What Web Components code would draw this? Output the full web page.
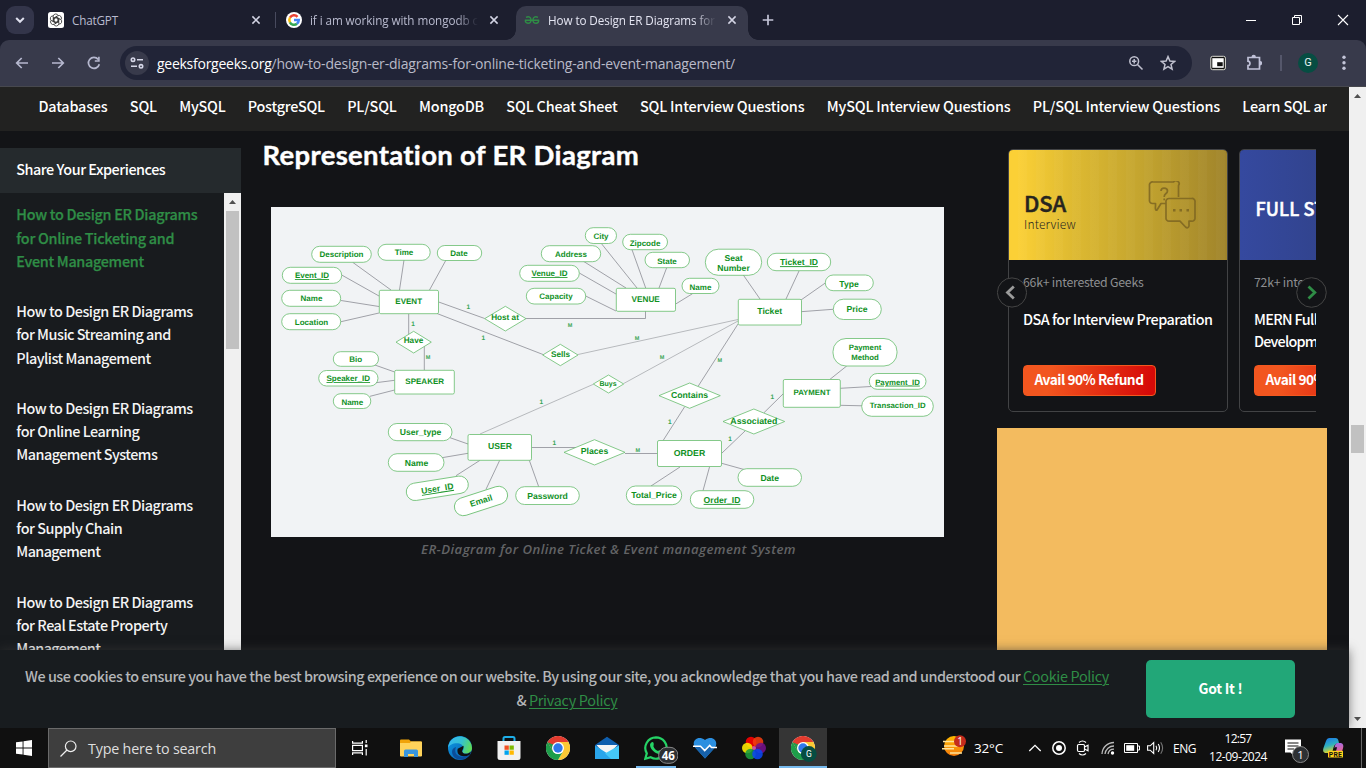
<!DOCTYPE html>
<html lang="en">
<head>
<meta charset="utf-8">
<title>How to Design ER Diagrams</title>
<style>
html,body{margin:0;height:100%;overflow:hidden;background:#131417}
</style>
</head>
<body>
<browser-window></browser-window>
<script>
const UI = '"Open Sans","Noto Sans",sans-serif';
const SRC = '"Noto Sans CJK SC","Open Sans",sans-serif';

function define(name, html, after) {
  const tpl = document.createElement('template');
  tpl.innerHTML = html;
  customElements.define(name, class extends HTMLElement {
    connectedCallback() {
      if (this.shadowRoot) return;
      this.attachShadow({mode: 'open'}).appendChild(tpl.content.cloneNode(true));
      if (after) after.call(this, this.shadowRoot);
    }
  });
}

/* One line of text tracked to an exact width. */
define('fit-text', `<style>:host{display:block;white-space:pre}span{display:inline-block}:host([link]) span{text-decoration:underline;text-decoration-thickness:1px;text-underline-offset:2px}</style><span><slot></slot></span>`, function (r) {
  const w = +this.getAttribute('w'), s = r.querySelector('span');
  if (!w) return;
  const n = this.textContent.length, nat = s.getBoundingClientRect().width;
  s.style.letterSpacing = ((w - nat) / n).toFixed(4) + 'px';
});

const chrome = `<circle cx="12" cy="12" r="12" fill="#fff"/><path d="M12 12 1.6 6A12 12 0 0 1 22.4 6z" fill="#e33b2e"/><path d="M12 6H22.4A12 12 0 0 1 12 24L17.2 15z" fill="#fcc934"/><path d="M6.8 15 1.6 6A12 12 0 0 0 12 24l5.2-9A6 6 0 0 1 6.8 15z" fill="#1e9e4a"/><path d="M12 6H1.6L6.8 15z" fill="#e33b2e"/><path d="M1.6 6 6.8 15 9 9z" fill="#1e9e4a"/><path d="M1.6 6H12L8 9z" fill="#e33b2e"/><circle cx="12" cy="12" r="6" fill="#fff"/><circle cx="12" cy="12" r="4.7" fill="#2f78ea"/>`;
const petal = [0,60,120,180,240,300].map(a => `<path d="M5.2 4.300A2.600 2.600 0 0 1 10.200 3.600M5.200 4.300V8.700L8 10.200M6.300 6.200 9.200 4.500" transform="rotate(${a} 8 8)"/>`).join('');
const ICONS = {
  down: [16,16,`<path d="M4.2 6 8 9.8 11.8 6" fill="none" stroke="#dfe0ee" stroke-width="2"/>`],
  gpt: [16,16,`<rect width="16" height="16" rx="2.5" fill="#fff"/><g fill="none" stroke="#2a2a2a" stroke-width=".75">${petal}</g>`],
  google: [16,16,`<circle cx="8" cy="8" r="8" fill="#fff"/><g fill="none" stroke-width="2.5"><path d="M4 5.7A4.7 4.7 0 0 1 11.5 4.8" stroke="#ea4335"/><path d="M4 10.4A4.7 4.7 0 0 1 4 5.6" stroke="#fbbc05"/><path d="M11 11.8A4.7 4.7 0 0 1 3.9 10.3" stroke="#34a853"/><path d="M8 8.1h4.8A4.7 4.7 0 0 1 10.9 11.8" stroke="#4285f4"/></g>`],
  gfg: [16,16,`<g fill="none" stroke="#2f8d46" stroke-width="1.4"><path d="M.8 8.200H15.200M2 5.400C4.800 4 7 5.200 7 8 7 10.500 5.200 11.300 3.900 11.300 2.100 11.300 1.300 10 1.300 8.200M14 5.400C11.200 4 9 5.200 9 8 9 10.500 10.800 11.300 12.100 11.300 13.900 11.300 14.700 10 14.700 8.200"/></g>`],
  x: [10,10,`<path d="M1.4 1.4l7.2 7.2M8.6 1.4 1.4 8.6" stroke="#d3d4e4" stroke-width="1.5"/>`],
  plus: [12,12,`<path d="M6 .7v10.6M.7 6h10.6" stroke="#c3c5d8" stroke-width="1.7"/>`],
  min: [12,12,`<path d="M1 6.5h10" stroke="#fff"/>`],
  restore: [12,12,`<path d="M1.5 3.5h7v7h-7zM3.5 3.5v-2h7v7h-2" fill="none" stroke="#fff"/>`],
  close: [12,12,`<path d="M1 1l10 10M11 1 1 11" stroke="#fff" stroke-width="1.1"/>`],
  back: [16,16,`<path d="M14 8H3M7.7 3 2.7 8l5 5" fill="none" stroke="#b6b8cf" stroke-width="1.7"/>`],
  fwd: [16,16,`<path d="M2 8h11M8.3 3l5 5-5 5" fill="none" stroke="#b6b8cf" stroke-width="1.7"/>`],
  reload: [16,16,`<path d="M13.3 9.2A5.5 5.5 0 1 1 12.2 4.4" fill="none" stroke="#b6b8cf" stroke-width="1.7"/><path d="M13.7 1.8v5H8.8V5.2h3.3V1.8z" fill="#b6b8cf"/>`],
  tune: [14,14,`<g fill="none" stroke="#d6d7e8" stroke-width="1.6"><circle cx="3" cy="3.7" r="1.7"/><path d="M7 3.7h6M1 10.3h6"/><circle cx="11" cy="10.3" r="1.7"/></g>`],
  zoom: [16,16,`<g fill="none" stroke="#c0c1cf" stroke-width="1.5"><circle cx="6.2" cy="6.2" r="4.4"/><path d="M9.5 9.5 14.5 14.5M6.2 4v4.4M4 6.2h4.4"/></g>`],
  star: [16,16,`<path d="M8 1.6 9.9 6l4.7.4-3.6 3.1 1.1 4.7L8 11.7l-4.1 2.5L5 9.5 1.4 6.4 6.1 6z" fill="none" stroke="#c0c1cf" stroke-width="1.5"/>`],
  pip: [16,16,`<rect x=".8" y="1.3" width="14.600" height="13.400" rx="1.800" fill="#111" stroke="#deded6" stroke-width="1"/><rect x="2.300" y="3.200" width="11.400" height="9.600" fill="#fff"/><rect x="7.200" y="7.200" width="5.500" height="4" fill="#111"/>`],
  ext: [16,17,`<path d="M2 3.5H13.5V15H2V11.6C4.6 11.6 4.6 7.2 2 7.2z" fill="none" stroke="#c0c1d8" stroke-width="1.7"/><path d="M5.5 3a2.2 2.2 0 0 1 4.4 0zM14 7a2.2 2.2 0 0 1 0 4.4z" fill="#c0c1d8"/>`],
  dots: [4,16,`<g fill="#c3c5d8"><circle cx="2" cy="2.3" r="1.7"/><circle cx="2" cy="7.8" r="1.7"/><circle cx="2" cy="13.2" r="1.7"/></g>`],
  up: [17,17,`<path d="M5 11 8.5 7 12 11z" fill="#505050"/>`],
  dn: [17,17,`<path d="M5 6 8.500 10 12 6z" fill="#505050"/>`],
  chat: [48,48,`<g fill="none" stroke="#7d6522" stroke-width="1.7" stroke-linejoin="round" opacity=".85"><path d="M3.5 1h22A3 3 0 0 1 30.500 4.500V16M18 22.500H13L9 29Q7 30 7.500 25V22.500H4.500A3 3 0 0 1 1.500 19V4.500A3 3 0 0 1 5 1"/><path d="M21 17.500H43.500A3 3 0 0 1 47 21V37A3 3 0 0 1 43.500 40.200H41V45Q40 48 37.500 46L32 40.200H21A3 3 0 0 1 18 37V21A3 3 0 0 1 21 17.500z"/><path d="M13 10Q13 7.200 16 7.200 19.500 7.200 19.500 10 19.500 11.500 17.500 13 16.200 14 16.200 16M16.200 17.500v1.800"/><path d="M25 29.200h2.500M31.500 29.200H34M38.500 29.200H41" stroke-width="2.400"/></g>`],
  left: [30,31,`<circle cx="15" cy="15.500" r="14.600" fill="#131417" stroke="#454545"/><path d="M16.800 9.500 10.500 15.500l6.300 6" fill="none" stroke="#9b9b9b" stroke-width="2.800"/>`],
  right: [31,31,`<circle cx="15.500" cy="15.500" r="14.800" fill="#131417" stroke="#454545"/><path d="M12.500 9.500 18.800 15.500l-6.300 6" fill="none" stroke="#2f8d46" stroke-width="2.800"/>`],
  win: [16,16,`<path d="M0 2.300 6.600 1.400V7.500H0zM7.500 1.200 16 0V7.500H7.500zM0 8.500H6.600V14.600L0 13.700zM7.500 8.500H16V16L7.500 14.800z" fill="#fff"/>`],
  search: [17,17,`<g fill="none" stroke="#eee" stroke-width="1.200"><circle cx="10.700" cy="6.300" r="5.300"/><path d="M7 10 .5 16.500"/></g>`],
  task: [16,16,`<g fill="none" stroke="#fff" stroke-width="1.200"><path d="M.6 1V3.200H10.400V1M.6 15V12.800H10.400V15M.6 5.400H10.400V10.600H.6zM14.200 0v3M14.200 9v6.500"/></g><path d="M12.900 4.500h2.600V7.200h-2.600z" fill="#fff"/>`],
  folder: [22,18,`<path d="M0 1.500A1 1 0 0 1 1 .5H9L11 2.500H21A1 1 0 0 1 22 3.500V17H0z" fill="#f0a30a"/><path d="M0 4 10 4 11 2.500H21A1 1 0 0 1 22 3.500V16.500A1 1 0 0 1 21 17.500H1A1 1 0 0 1 0 16.500z" fill="#ffd35b"/><path d="M4 18V12A1.500 1.500 0 0 1 5.500 10.500H16.500A1.500 1.500 0 0 1 18 12V18H14V15H8V18z" fill="#3a96dd"/>`],
  edge: [24,24,`<defs><linearGradient id="e1" x1="0" y1=".2" x2="1" y2=".5"><stop stop-color="#36b8f2"/><stop offset=".55" stop-color="#35c1d0"/><stop offset="1" stop-color="#5fdc58"/></linearGradient><linearGradient id="e2" x1="0" y1="0" x2="1" y2="1"><stop stop-color="#0c9be6"/><stop offset="1" stop-color="#0b58a8"/></linearGradient></defs><circle cx="12" cy="12" r="12" fill="url(#e2)"/><path d="M.5 9A12 12 0 0 1 24 12C24 16 20.500 17.500 18 17.500 15 17.500 13.500 16 14.800 14.600 16.500 12.500 15.500 7.800 10 7.200 5 6.800 1 9 .1 12z" fill="url(#e1)"/><path d="M8 11C5 19 12 23 20.500 19.500 18 24 10 25 6 21 2.500 16 4 12 8 11z" fill="#0b4d99"/><path d="M15.500 9.700C16 13 13.500 14 14.300 15.900 15.800 18.500 20 18.500 23 15.500L21.500 19C14 22 8 19 9.700 12.700z" fill="#101010"/>`],
  store: [24,24,`<path d="M6.500 6V2.500A1.500 1.500 0 0 1 8 1H16A1.500 1.500 0 0 1 17.500 2.500V6" fill="none" stroke="#1daee8" stroke-width="2"/><path d="M.5 5H23.500V21.500A2.500 2.500 0 0 1 21 24H3A2.500 2.500 0 0 1 .5 21.500z" fill="#f1f1f1"/><path d="M7.500 9.500h4.300v4.300H7.500z" fill="#f25022"/><path d="M12.500 9.500h4.300v4.300h-4.300z" fill="#7fba00"/><path d="M7.500 14.500h4.300v4.300H7.500z" fill="#00a4ef"/><path d="M12.500 14.500h4.300v4.300h-4.300z" fill="#ffb900"/>`],
  chrome: [24,24,chrome],
  mail: [24,24,`<path d="M0 9 12 .8 24 9V12H0z" fill="#0f5fae"/><path d="M1.500 9h21L14 18H9z" fill="#f5f5f5"/><path d="M0 9.500 14 18.500 24 23H0z" fill="#2aa5ea"/><path d="M24 9.500 10 17.500 16 23H24z" fill="#45c8f7"/>`],
  wa: [34,28,`<path d="M12 1.300A10.700 10.700 0 1 1 6.700 21.300L1.300 22.700 2.800 17.400A10.700 10.700 0 0 1 12 1.300z" fill="#101010" stroke="#25d366" stroke-width="2.200"/><path d="M8 6.200C10 5.500 10 9.300 9.400 10.300 10 12.500 12 14.300 14 15 15.500 13.500 18 15 18 15.500 17 18.500 14 18.500 11 16.500 8 14.500 6 11.500 6 9 6 7.500 7 6.500 8 6.200z" fill="#25d366"/><rect x="14.600" y="11.300" width="19.400" height="16" rx="8" fill="#2d3033" stroke="#888"/><text x="24.300" y="23.500" text-anchor="middle" font-family="Open Sans" font-size="11.500" font-weight="700" fill="#fff">46</text>`],
  heart: [24,24,`<path d="M12 22.500 2 11.500C-2 6 4-1.500 12 4 20-1.500 26 6 22 11.500z" fill="#2b8fe0"/><path d="M1 10H8L11 14 16 9.500 18 11H22.500L12 22.500z" fill="#1762ab"/><path d="M0 10.200H7.500L11.700 14.500 16.700 9.500 18.500 11.500H24" fill="none" stroke="#fff" stroke-width="1.600"/>`],
  photos: [24,24,`<g fill-opacity=".88"><circle cx="9" cy="6" r="5.300" fill="#f00"/><circle cx="16" cy="6" r="5.300" fill="#f33c10"/><circle cx="5.300" cy="12" r="5.300" fill="#fe0"/><circle cx="18.700" cy="12" r="5.300" fill="#73108a"/><circle cx="8.500" cy="18" r="5.300" fill="#1a9c3c"/><circle cx="15.500" cy="18" r="5.300" fill="#0a47f0"/><circle cx="12" cy="12" r="2" fill="#e85bb0"/></g>`],
  chromeg: [26,26,`${chrome}<circle cx="17.800" cy="18" r="7.900" fill="#064d42"/><text x="17.800" y="21.300" text-anchor="middle" font-family="Roboto" font-size="8.500" fill="#fff">G</text>`],
  sun: [26,24,`<defs><linearGradient id="s" x2="0" y2="1"><stop stop-color="#ffb900"/><stop offset="1" stop-color="#f47a0c"/></linearGradient></defs><circle cx="12" cy="11" r="10" fill="url(#s)"/><path d="M1 6.500H14M2 11H20M0 13.800H12M8 18H20" stroke="#ffe49b" stroke-width="1.400"/><circle cx="18" cy="6.200" r="6" fill="#c42b1c"/><text x="18" y="10" text-anchor="middle" font-family="Open Sans" font-size="10" fill="#fff">1</text>`],
  chev: [14,14,`<path d="M1.300 10 7 4.300 12.700 10" fill="none" stroke="#fff" stroke-width="1.300"/>`],
  rec: [14,14,`<circle cx="7" cy="7" r="6.200" fill="none" stroke="#fff" stroke-width="1.500"/><circle cx="7" cy="7" r="3" fill="#fff"/>`],
  cam: [14,16,`<g fill="none" stroke="#fff" stroke-width="1.200"><rect x="1.500" y="4.500" width="7" height="7" rx="1.200"/><path d="M8.500 7 12 5.300V10.700L8.500 9M3 2.500Q6.500-.5 10 2.500M3 13.500Q6.500 16.500 10 13.500"/></g>`],
  wifi: [14,14,`<g fill="none" stroke="#bbb" stroke-width="1.300"><path d="M1 13A12 12 0 0 1 13 1.500M4 13A9 9 0 0 1 13 5M7 13A6 6 0 0 1 13 8.200"/></g><circle cx="11.500" cy="12" r="1.700" fill="#fff"/>`],
  bat: [16,10,`<path d="M.5.500H13.500V9.500H.5zM13.500 3H15.500V7H13.500" fill="none" stroke="#fff"/><path d="M2.200 2.200H10.200V7.800H2.200z" fill="#fff"/>`],
  vol: [17,14,`<g fill="none" stroke="#fff" stroke-width="1.100"><path d="M.6 4.800H3.200L6.700 1.500V12.500L3.200 9.200H.6zM9 4.700Q10.500 7 9 9.300M11.200 3Q13.800 7 11.200 11"/><path d="M13.700 1.300Q17.500 7 13.700 12.700" stroke="#777"/></g>`],
  note: [26,26,`<path d="M0 1.500H16V14.500H9V18L5.500 14.500H0z" fill="#fff"/><path d="M2.500 5H13.500M2.500 8H13.500M2.500 11H9" stroke="#101010" stroke-width="1.200"/><circle cx="15.500" cy="16.500" r="8" fill="#2d3033" stroke="#888"/><text x="15.500" y="20.700" text-anchor="middle" font-family="Open Sans" font-size="11.500" fill="#fff">1</text>`],
  copilot: [22,20,`<defs><linearGradient id="c1" x2=".3" y2="1"><stop stop-color="#1a74ea"/><stop offset=".55" stop-color="#2fb0c0"/><stop offset="1" stop-color="#d8d52a"/></linearGradient><linearGradient id="c2" x2=".2" y2="1"><stop stop-color="#9b6cf0"/><stop offset="1" stop-color="#f0648a"/></linearGradient></defs><path d="M6.500 0H12.500Q15 0 15.500 3L16 5Q12 5 10.500 9.500L9 15H3.500Q-1.500 15 .8 9L3 3Q4 0 6.500 0z" fill="url(#c1)"/><path d="M15 5H18Q21.500 6 19.800 11L18.500 15H12.500L14 9.500Q13 8.500 11.500 10 12 5 15 5z" fill="url(#c2)"/><rect x="5" y="12.800" width="15" height="6.700" rx=".6" fill="#ffd21a"/><text x="12.500" y="18.700" text-anchor="middle" font-family="Roboto" font-size="6.800" font-weight="700" letter-spacing=".3" fill="#111">PRE</text>`]
};
define('ui-icon', `<style>:host{display:block;flex:none;line-height:0}svg{display:block}</style>`, function (r) {
  const [w, h, body] = ICONS[this.getAttribute('name')];
  r.innerHTML += `<svg width="${w}" height="${h}" viewBox="0 0 ${w} ${h}">${body}</svg>`;
});

/* Browser tab */
define('browser-tab', `<style>
:host{display:flex;box-sizing:border-box;height:34px;align-items:center;padding:0 0 6px 8px;font:11.700px ${UI};color:#b9bbcf;width:236px;position:relative}
:host([active]){background:#383a4b;color:#e4e5f2;border-radius:10px 10px 0 0;width:232px}
.t{margin-left:8px;flex:none;width:168px;overflow:hidden;-webkit-mask:linear-gradient(90deg,#000 87%,transparent)}
:host([short]) .t{-webkit-mask:none}
ui-icon[name=x]{margin-left:11px}
:host([active])::before,:host([active])::after{content:"";position:absolute;bottom:0;width:10px;height:10px}
:host([active])::before{left:-10px;background:radial-gradient(circle at 0 0,transparent 9.500px,#383a4b 10px)}
:host([active])::after{right:-10px;background:radial-gradient(circle at 100% 0,transparent 9.500px,#383a4b 10px)}
</style><slot name="icon"></slot><div class="t"><slot></slot></div><ui-icon name="x"></ui-icon>`);

define('tab-strip', `<style>
:host{display:flex;height:40px;background:#1c1e2e;align-items:flex-end}
.menu{width:28px;height:28px;border-radius:9px;background:#33354a;margin:0 14px 6px 6px;display:flex;align-items:center;justify-content:center}
.sep{width:1px;height:16px;background:#484a5e;margin:0 2px 12px 1px}
.plus{margin:0 0 14px 14px}.win{margin-left:auto;display:flex;gap:34px;padding:0 17px 14px 0}
browser-tab{flex:none}
.a{width:234px}.b{width:238px}
</style>
<div class="menu"><ui-icon name="down"></ui-icon></div>
<browser-tab style="margin-left:-8px" class="a" short><ui-icon slot="icon" name="gpt"></ui-icon><fit-text w="46">ChatGPT</fit-text></browser-tab>
<div class="sep"></div>
<browser-tab class="b"><ui-icon slot="icon" name="google"></ui-icon><fit-text w="168">if i am working with mongodb c</fit-text></browser-tab>
<browser-tab active><ui-icon slot="icon" name="gfg"></ui-icon><fit-text w="167">How to Design ER Diagrams for</fit-text></browser-tab>
<ui-icon class="plus" name="plus"></ui-icon>
<div class="win"><ui-icon name="min"></ui-icon><ui-icon name="restore"></ui-icon><ui-icon name="close"></ui-icon></div>`);

define('tool-bar', `<style>
:host{display:block;background:#1c1e2e}
.bar{background:#383a4b;border-radius:9px 9px 0 0;display:flex;align-items:center;border-bottom:1px solid #47484e;box-sizing:border-box;height:47px;font:14px ${UI}}
.nav{display:flex;gap:20px;margin-left:14px}
.omni{margin-left:18px;width:1072px;height:34px;box-sizing:border-box;border-radius:17px;background:#212437;display:flex;align-items:center;padding:0 16px 0 5px;flex:none;color:#b9bac8}
.tune{width:24px;height:24px;border-radius:50%;background:#383a4b;display:flex;align-items:center;justify-content:center;margin-right:8px}
.d{color:#fff}.icons{margin-left:auto;display:flex;gap:16px}
.pip{margin-left:18px}.ext{margin:-2px 0 0 20px}
.sep{width:1.500px;height:16px;background:#55576b;margin-left:18px}
.av{margin-left:16.500px;width:20px;height:20px;border-radius:50%;background:#064d42;color:#e8f3f0;font:11px/20px Roboto,sans-serif;text-align:center}
.dots{margin-left:24px}
</style><div class="bar"><div class="nav"><ui-icon name="back"></ui-icon><ui-icon name="fwd"></ui-icon><ui-icon name="reload"></ui-icon></div>
<div class="omni"><div class="tune"><ui-icon name="tune"></ui-icon></div><fit-text class="d" w="114.500">geeksforgeeks.org</fit-text><fit-text w="463.500">/how-to-design-er-diagrams-for-online-ticketing-and-event-management/</fit-text>
<div class="icons"><ui-icon name="zoom"></ui-icon><ui-icon name="star"></ui-icon></div></div>
<ui-icon class="pip" name="pip"></ui-icon><ui-icon class="ext" name="ext"></ui-icon><div class="sep"></div><div class="av">G</div><ui-icon class="dots" name="dots"></ui-icon></div>`);

define('scroll-bar', `<style>
:host{display:flex;flex-direction:column;width:17px;background:#f0f0f0;flex:none;overflow:hidden}
.thumb{background:#c1c1c1;margin:var(--top,1px) 2px 0;height:var(--len,100px);flex:none}
.dn{margin-top:auto}
</style><ui-icon name="up"></ui-icon><div class="thumb"></div><ui-icon class="dn" name="dn"></ui-icon>`);

define('topic-nav', `<style>
:host{display:block;background:#222221;height:44px;box-sizing:border-box;padding:0 22px 0 38.500px;font:500 14.400px/38px ${SRC};color:#fff}
.r{display:flex;gap:22.350px;overflow:hidden;height:40px}fit-text{flex:none}
</style><div class="r"><fit-text w="69">Databases</fit-text><fit-text w="27">SQL</fit-text><fit-text w="46.300">MySQL</fit-text><fit-text w="77">PostgreSQL</fit-text><fit-text w="49.500">PL/SQL</fit-text><fit-text w="65">MongoDB</fit-text><fit-text w="111.200">SQL Cheat Sheet</fit-text><fit-text w="164.500">SQL Interview Questions</fit-text><fit-text w="183.700">MySQL Interview Questions</fit-text><fit-text w="187.200">PL/SQL Interview Questions</fit-text><fit-text w="85">Learn SQL ar</fit-text></div>`);

define('side-list', `<style>
:host{display:flex;flex-direction:column;width:241px;height:580px;font:500 14.400px/23.200px ${SRC};color:#f4f4f4}
.h{background:#252a2d;height:45px;box-sizing:border-box;padding:9px 16.300px;flex:none;color:#fff}
.b{display:flex;flex:1;min-height:0}.l{flex:1;background:#181b1e;padding:9.400px 0 0 16.300px;overflow:hidden}
.i{margin-bottom:27.200px}.on{color:#2f8d46;-webkit-text-stroke:.25px #2f8d46}
scroll-bar{--len:138px}
</style><div class="h"><fit-text w="149">Share Your Experiences</fit-text></div>
<div class="b"><div class="l">
<div class="i on"><fit-text w="181">How to Design ER Diagrams</fit-text><fit-text w="158">for Online Ticketing and</fit-text><fit-text w="127.500">Event Management</fit-text></div>
<div class="i"><fit-text w="176.500">How to Design ER Diagrams</fit-text><fit-text w="154.500">for Music Streaming and</fit-text><fit-text w="134.500">Playlist Management</fit-text></div>
<div class="i"><fit-text w="176.500">How to Design ER Diagrams</fit-text><fit-text w="123">for Online Learning</fit-text><fit-text w="141">Management Systems</fit-text></div>
<div class="i"><fit-text w="176.500">How to Design ER Diagrams</fit-text><fit-text w="106">for Supply Chain</fit-text><fit-text w="84">Management</fit-text></div>
<div class="i"><fit-text w="176.500">How to Design ER Diagrams</fit-text><fit-text w="151">for Real Estate Property</fit-text><fit-text w="84">Management</fit-text></div>
</div><scroll-bar></scroll-bar></div>`);

/* Entity-relationship diagram. Shapes: p pill, e entity, d diamond; x1,y1,x2,y2, text x,y, size, text, underline, rotation */
const NODES = [
['p',311.7,246.3,371.3,262.3,341.5,254.3,8,'Description'],['p',378,244.3,430.2,260.3,404,252.5,8,'Time'],['p',437.3,245.5,481.7,260.5,459,253.5,8,'Date'],
['p',282.3,267.3,341.7,283.3,312,275.3,8,'Event_ID',1],['p',281.7,290.3,340.7,306.3,311.5,298.5,8,'Name'],['p',281.7,313.7,340.7,329.7,311.5,322,8,'Location'],
['e',379.3,290.3,438.5,313.7,408.7,301.3,8,'EVENT'],['d',484.7,306.3,526,331,505,317.7,8.2,'Host at'],['d',396,331.3,431.3,353,413.5,340.7,8.2,'Have'],['d',542.7,344.3,578,365.7,560.5,354.3,8.2,'Sells'],
['p',333.3,351.7,378.5,366.3,355.8,359.7,8,'Bio'],['p',318.7,370.5,378,386,348.3,378.3,8,'Speaker_ID',1],['p',333.3,393.7,370.8,408.5,352.3,402,8,'Name'],['e',394.7,370.3,454.3,394,424.7,381.3,8,'SPEAKER'],
['p',526.3,288.3,585.7,304,556,296.5,8,'Capacity'],['p',519.7,265.3,579.3,281.3,549.5,273.3,8,'Venue_ID',1],['p',541.3,245.7,600.7,261.7,571,253.8,8,'Address'],['p',585.3,227.7,616.5,243.5,601,236,8,'City'],
['p',622.7,234.3,667.5,249.7,645,243.3,8,'Zipcode'],['p',645,252.3,689.5,267.7,667,261,8,'State'],['p',682,278.3,719,293.5,700.5,287,8,'Name'],['e',616.3,288.3,675.5,311.3,645.7,299.3,8.2,'VENUE'],
['p',705.3,249.2,761.7,275.3,733.5,263.3,8.6,'Seat|Number'],['p',767.3,253.3,830.7,270.7,799,262.3,8.6,'Ticket_ID',1],['p',825.3,275,873.3,290.7,849,284,8.6,'Type'],['p',833.3,299.2,881.3,319.5,857,309,8.6,'Price'],['e',738.3,299.3,801.5,325,769.7,311.3,8.6,'Ticket'],
['p',833,338.5,897,366,865,352.6,7.8,'Payment|Method'],['d',593.3,375,623.7,393,608,383.5,7,'Buys'],['d',659,383,720.3,408.3,689.5,394.7,8.7,'Contains'],['d',723,409,784.7,434,753.8,420.7,8.8,'Associated'],
['e',783.3,379.5,840.3,407.3,812,392.3,7.8,'PAYMENT'],['p',869.3,373.5,926,389.3,897.5,382,7.8,'Payment_ID',1],['p',861.7,396.3,933.3,416.3,897.7,405.7,7.8,'Transaction_ID'],
['e',657.5,440.5,721.5,466.5,689.5,452.7,8.7,'ORDER'],['d',564,439.7,625,465,594.5,451.5,8.7,'Places'],['p',626.3,486,681.7,504.7,654,495.5,8.6,'Total_Price'],['p',690.3,490.7,753.8,508.3,722,500,8.6,'Order_ID',1],['p',738,468.7,801.5,486.3,769.7,478,8.6,'Date'],
['e',468,434.5,531.5,460.3,500,446.5,8.6,'USER'],['p',388.3,423.5,452,440.7,420.5,432.5,8.6,'User_type'],['p',388.3,453.7,444,471.3,416.5,463,8.6,'Name'],
['p',406,479.6,468.6,497,437.3,488.5,8.6,'User_ID',1,-9],['p',453.5,492,508.5,510,481.2,500.8,8.6,'Email',0,-18],['p',515.7,486.7,579.3,504.5,547.5,496,8.6,'Password']];
const EDGES = ['352.7 262.3 391 290','404 260 399.500 290','446 260 429.500 290','341.700 275 379 296','341 300.500 379 306.500','341 321.700 379 313','438.700 302 484.700 318.500','437 313.500 543 354.500','408.700 314 408.700 334','424.300 345 424.300 370','374 364.700 394.700 372','376 382.700 394.700 380.300','370 396.300 394.700 390','526 318.500 645.500 318.500 645.500 311','601.500 243.700 637 288','583 261 626 288','579.300 273 616 294','585.700 296 616 311','632 249.700 645.700 288','666.700 267.700 659 288','692.500 293.700 675.700 304','743.300 275 760 299','799 271 786 299','825.300 283 801 300','833 309.300 801 311.700','578 354.500 738 319.500','623.700 383.500 738 321','593.300 384.300 480 434','738 324 698.300 386','684.700 406.700 663 440.700','846.700 366 830 379.300','840.300 388.300 871 386.500','840.300 405.300 862 405.800','783.300 393.700 764 412.700','745 431 721.700 453.300','625 453.500 657.300 453.500','531.700 447.500 576 447.500','680 467 651 486','709.500 467 703 490.700','721.700 463.300 744 469.500','450 437.700 468 444','442 457.700 468 453.300','480 460.300 456 475.700','499.700 460.300 486 489.300','529.300 460.300 538.700 486.700'];
const FAINT = [25, 26, 27];
const MARKS = [[468.3,307,1],[483.3,338,1],[413,324,1],[428,357,'M'],[570,324.5,'M'],[637,337.7,'M'],[662,357.3,'M'],[719.7,360,'M'],[541.3,402,1],[554.3,442.5,1],[637.7,449.5,'M'],[669.7,421.7,1],[730,438.5,1],[772.3,396.5,1]];
define('er-diagram', `<style>:host{display:block}svg{display:block;background:#f1f3f5;font-family:"Liberation Sans",sans-serif;font-weight:700;text-anchor:middle;text-rendering:geometricPrecision}</style>`, function (r) {
  let s = '';
  EDGES.forEach((e,i) => s += `<polyline points="${e}" fill="none" stroke="${FAINT.includes(i) ? '#a3a5aa' : '#84868e'}" stroke-width=".75"/>`);
  for (const [k,x1,y1,x2,y2,tx,ty,fs,t,u,rot] of NODES) {
    const a = 'fill="#fff" stroke="#67bd6d" stroke-width=".8"', w = x2-x1, h = y2-y1, mx = (x1+x2)/2, my = (y1+y2)/2;
    s += `<g${rot ? ` transform="rotate(${rot} ${mx} ${my})"` : ''}>`;
    s += k === 'd' ? `<path d="M${x1} ${my} ${mx} ${y1} ${x2} ${my} ${mx} ${y2}z" stroke-linejoin="round" ${a}/>` : `<rect x="${x1}" y="${y1}" width="${w}" height="${h}" rx="${k === 'p' ? Math.min(h/2,13) : 1.5}" ${a}/>`;
    const L = t.split('|'), lh = fs*1.22;
    L.forEach((q,i) => s += `<text x="${tx}" y="${(ty + fs*.34 + (i-(L.length-1)/2)*lh).toFixed(2)}" font-size="${fs}" fill="#10911f"${u ? ' text-decoration="underline"' : ''}>${q}</text>`);
    s += '</g>';
  }
  for (const [x,y,t] of MARKS) s += `<text x="${x}" y="${y+2}" font-size="${t === 1 ? 6.5 : 5.5}" fill="#3aa655">${t}</text>`;
  r.innerHTML += `<svg width="673" height="330" viewBox="271 207 673 330">${s}</svg>`;
});

define('article-body', `<style>
:host{display:block;width:703px;color:#fff;padding-top:1px}
.h{font:700 27.500px/46px Lato,"Open Sans",sans-serif;-webkit-text-stroke:.4px #fff;padding-left:6.500px;height:75px;box-sizing:border-box}
er-diagram{margin-left:15px}
.c{display:flex;justify-content:center;font:italic 600 13.200px/24px "Open Sans",sans-serif;color:#626365;width:705px}
</style><div class="h"><fit-text w="377">Representation of ER Diagram</fit-text></div><er-diagram></er-diagram><div class="c"><fit-text w="375">ER-Diagram for Online Ticket &amp; Event management System</fit-text></div>`);

define('course-card', `<style>
:host{display:block;box-sizing:border-box;width:220px;height:263px;border:1px solid #424345;border-radius:5px;overflow:hidden;flex:none;font:500 14.400px/22px ${SRC};color:#fff}
.b{padding:11px 14px 0}.m{color:#8d8f91;font:12.300px/22px ${SRC}}.t{margin-top:15px;height:46px;padding-bottom:11px}
.btn{width:133px;height:31px;box-sizing:border-box;border:1px solid #f4571f;border-radius:4px;background:linear-gradient(100deg,#f2561f 20%,#d60a08 95%);font-weight:700;font-size:13.700px;line-height:27px;padding-left:10.500px}
</style><slot name="art"></slot><div class="b"><div class="m"><slot name="meta"></slot></div><div class="t"><slot></slot></div><div class="btn"><fit-text w="109">Avail 90% Refund</fit-text></div></div>`);

define('course-rail', `<style>
:host{display:block;width:330px;height:279px;position:relative}
.r{display:flex;gap:11px;width:308px;margin-left:11px;overflow:hidden}
.art{height:110px;box-sizing:border-box;display:block}
.y{background:repeating-linear-gradient(90deg,#0000 0 9px,#ffffff06 9px 18px),linear-gradient(90deg,#fbd036 4%,#ddb931 30%,#c4a52f 60%,#a0842b);display:flex;justify-content:space-between;padding:31px 31px 0 15px;color:#26241f}
.bl{background:linear-gradient(90deg,#35499f,#2b3a70);padding:47px 0 0 15.500px;font:500 18px/22px ${SRC};-webkit-text-stroke:.5px #fff}
.big{font:500 22px/26px ${SRC};margin-top:8px;-webkit-text-stroke:.5px #26241f}.sm{font:300 12px/18px ${SRC}}
.l,.n{position:absolute;top:128px}.l{left:0}.n{right:0}
</style><div class="r"><course-card><div slot="art" class="art y"><div><fit-text class="big" w="42">DSA</fit-text><fit-text class="sm" w="52">Interview</fit-text></div><ui-icon name="chat"></ui-icon></div><fit-text slot="meta" w="120.500">66k+ interested Geeks</fit-text><fit-text w="189.500">DSA for Interview Preparation</fit-text></course-card>
<course-card><div slot="art" class="art bl"><fit-text w="104">FULL STACK</fit-text></div><fit-text slot="meta" w="120.500">72k+ interested Geeks</fit-text><fit-text w="131">MERN Full Stack Web</fit-text><fit-text w="84">Development</fit-text></course-card></div>
<ui-icon class="l" name="left"></ui-icon><ui-icon class="n" name="right"></ui-icon>`);

define('cookie-bar', `<style>
:host{display:flex;height:78px;box-sizing:border-box;background:#181c1f;box-shadow:0 0 10px #3a3a3aa0;font:500 14.400px/24px ${SRC};color:#b4b6b8;position:absolute;left:0;right:17px;bottom:0;padding:14px 54px 0 25px;justify-content:space-between}
.t{width:1084px}.r{display:flex;justify-content:flex-start}.k{justify-content:center}
fit-text{flex:none}
.g{color:#2f8d46;font-weight:400}
.b{width:149px;height:58px;margin-top:-4px;background:#22a778;border-radius:5px;color:#fff;font-weight:700;font-size:13.900px;line-height:57px;display:flex;justify-content:center}
</style><div class="t"><div class="r"><fit-text w="998">We use cookies to ensure you have the best browsing experience on our website. By using our site, you acknowledge that you have read and understood our </fit-text><fit-text link class="g" w="86">Cookie Policy</fit-text></div><div class="r k"><fit-text w="12.500">&amp; </fit-text><fit-text link class="g" w="88.500">Privacy Policy</fit-text></div></div><div class="b"><fit-text w="44">Got It !</fit-text></div>`);

define('page-view', `<style>
:host{display:flex;height:641px;position:relative;overflow:hidden}
.p{width:1349px;background:#131417;flex:none}
.cols{display:flex}
side-list{margin-top:17px;flex:none}article-body{margin-left:15px;flex:none}
.right{margin:18px 0 0 38px;width:330px}.ad{height:300px;background:#f3bb5f}
scroll-bar{--top:321px;--len:28px}
</style><div class="p"><topic-nav></topic-nav><div class="cols"><side-list></side-list><article-body></article-body><div class="right"><course-rail></course-rail><div class="ad"></div></div></div></div><scroll-bar></scroll-bar><cookie-bar></cookie-bar>`);

define('task-cell', `<style>:host{display:flex;width:48px;height:40px;align-items:center;justify-content:center;flex:none;box-sizing:border-box;margin-right:1px}
:host([on]){background:linear-gradient(#76b9ed,#76b9ed) center bottom/40px 2px no-repeat}
:host([active]){background:linear-gradient(#76b9ed,#76b9ed) center bottom/48px 2px no-repeat #353535}</style><slot></slot>`);

define('task-bar', `<style>
:host{display:flex;height:40px;background:#101010;align-items:center;font:12px ${UI};color:#fff}
.s{width:288px;height:40px;box-sizing:border-box;border:1px solid #6a6a6a;background:#3e3e3e;display:flex;align-items:center;padding-left:11px;font-size:14.300px;color:#dedede;gap:11px;flex:none}
.start{margin-right:0}.tv{margin-right:3px}
.tray{display:flex;align-items:center;flex:1;padding-left:114px}
.clock{display:flex;flex-direction:column;align-items:center;line-height:18px;width:58px;margin-left:13px}
.end{width:1px;height:40px;background:#666;margin-left:auto;margin-right:4px}
</style><task-cell class="start"><ui-icon name="win"></ui-icon></task-cell><div class="s"><ui-icon name="search"></ui-icon><fit-text w="128">Type here to search</fit-text></div><task-cell class="tv"><ui-icon name="task"></ui-icon></task-cell>
<task-cell><ui-icon name="folder"></ui-icon></task-cell><task-cell><ui-icon name="edge"></ui-icon></task-cell><task-cell><ui-icon name="store"></ui-icon></task-cell><task-cell><ui-icon name="chrome"></ui-icon></task-cell><task-cell><ui-icon name="mail"></ui-icon></task-cell><task-cell on><ui-icon name="wa" style="margin:4px 0 0 10px"></ui-icon></task-cell><task-cell><ui-icon name="heart"></ui-icon></task-cell><task-cell><ui-icon name="photos"></ui-icon></task-cell><task-cell active><ui-icon name="chromeg" style="margin:2px 0 0 2px"></ui-icon></task-cell>
<div class="tray"><ui-icon name="sun" style="margin-bottom:2px"></ui-icon><fit-text w="29" style="margin-left:6px;font-size:13.500px">32°C</fit-text><ui-icon name="chev" style="margin-left:25px"></ui-icon><ui-icon name="rec" style="margin-left:10px"></ui-icon><ui-icon name="cam" style="margin-left:10px"></ui-icon><ui-icon name="wifi" style="margin-left:11px"></ui-icon><ui-icon name="bat" style="margin-left:9px"></ui-icon><ui-icon name="vol" style="margin-left:7px"></ui-icon><fit-text w="23" style="margin-left:9px">ENG</fit-text><div class="clock"><fit-text w="27">12:57</fit-text><fit-text w="58">12-09-2024</fit-text></div><ui-icon name="note" style="margin:5px 0 0 18px"></ui-icon><ui-icon name="copilot" style="margin-left:12px"></ui-icon><div class="end"></div></div>`);

define('browser-window', `<style>:host{display:flex;flex-direction:column;width:1366px;height:768px;overflow:hidden}tab-strip,tool-bar,page-view,task-bar{flex:none}</style><tab-strip></tab-strip><tool-bar></tool-bar><page-view></page-view><task-bar></task-bar>`);
</script>
</body>
</html>
